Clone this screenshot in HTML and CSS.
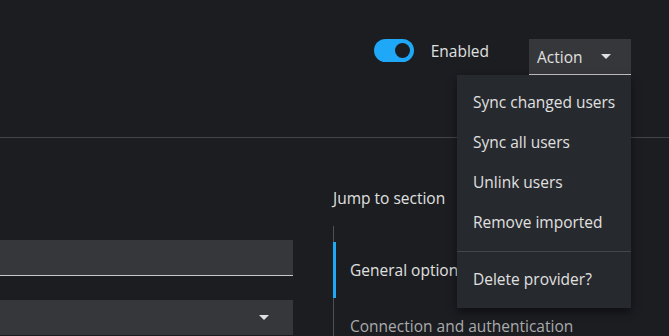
FILE: index.html
```html
<!DOCTYPE html>
<html lang="en">
<head>
    <meta charset="UTF-8">
    <meta name="viewport" content="width=device-width, initial-scale=1.0">
    <title>User federation provider</title>
    <link rel="stylesheet" href="styles.css">
</head>
<body>

    <!-- Page header with enable switch and action menu -->
    <header class="page-header">
        <label class="switch">
            <span class="switch-track"><span class="switch-knob"></span></span>
            <span class="switch-label">Enabled</span>
        </label>
        <div class="dropdown">
            <button class="dropdown-toggle">
                <span>Action</span>
                <span class="caret"></span>
            </button>
            <ul class="dropdown-menu">
                <li>Sync changed users</li>
                <li>Sync all users</li>
                <li>Unlink users</li>
                <li>Remove imported</li>
                <li class="divider"></li>
                <li>Delete provider?</li>
            </ul>
        </div>
    </header>

    <main class="page-body">
        <div class="form">
            <div class="text-input"></div>
            <div class="select-input"><span class="caret"></span></div>
        </div>
        <aside class="jump-links">
            <h2>Jump to section</h2>
            <ul class="jump-list">
                <li class="active">General options</li>
                <li>Connection and authentication</li>
            </ul>
        </aside>
    </main>

</body>
</html>
```

FILE: styles.css
```css
body {
    margin: 0;
    background-color: #1b1d21;
    color: #e0e0e0;
    font-family: "Open Sans", "Noto Sans", sans-serif;
    font-size: 15.5px;
    height: 336px;
    overflow: hidden;
}

ul { list-style: none; margin: 0; padding: 0; }

/* Header */
.page-header {
    height: 138px;
    box-sizing: border-box;
    border-bottom: 1px solid #444548;
    display: flex;
    justify-content: flex-end;
    align-items: flex-start;
    padding: 39px 38px 0 0;
}
.switch { display: flex; align-items: center; gap: 17px; margin-right: 40px; }
.switch-track {
    width: 40px;
    height: 23px;
    border-radius: 12px;
    background-color: #1fa7f8;
    display: flex;
    align-items: center;
    justify-content: flex-end;
    padding-right: 4px;
    box-sizing: border-box;
}
.switch-knob { width: 15px; height: 15px; border-radius: 50%; background-color: #1b1d21; }
.switch-label { line-height: 22px; }

.dropdown { position: relative; }
.dropdown-toggle {
    width: 102px;
    height: 36px;
    display: flex;
    align-items: center;
    justify-content: space-between;
    padding: 0 20px 0 8px;
    background-color: #36373a;
    border: none;
    border-bottom: 1px solid #c7c7c7;
    color: #e0e0e0;
    font: inherit;
}
.caret {
    width: 0;
    height: 0;
    border-left: 5px solid transparent;
    border-right: 5px solid transparent;
    border-top: 5px solid #e0e0e0;
}
.dropdown-menu {
    position: absolute;
    top: 36px;
    right: 0;
    width: 174px;
    padding: 8px 0;
    background-color: #26292d;
    box-shadow: 0 4px 8px rgba(0, 0, 0, 0.5);
}
.dropdown-menu li { height: 40px; line-height: 38px; padding-left: 16px; }
.dropdown-menu .divider { height: 1px; margin: 8px 0; padding: 0; background-color: #444548; }

/* Body */
.page-body { display: flex; gap: 40px; }
.form { width: 293px; padding-top: 102px; }
.text-input {
    height: 35px;
    background-color: #36373a;
    border-bottom: 1px solid #c7c7c7;
    margin-bottom: 24px;
}
.select-input {
    height: 35px;
    background-color: #36373a;
    display: flex;
    justify-content: flex-end;
    padding: 15px 24px 0 0;
    box-sizing: border-box;
}
.jump-links h2 { font-size: 15.5px; font-weight: normal; margin: 48px 0 16px; line-height: 24px; }
.jump-list { border-left: 1px solid #4f5255; padding-top: 16px; }
.jump-list li { height: 56px; line-height: 56px; padding-left: 16px; color: #aaabac; white-space: nowrap; }
.jump-list li.active { color: #e0e0e0; box-shadow: inset 3px 0 0 #1fa7f8; margin-left: -1px; padding-left: 17px; }
```
